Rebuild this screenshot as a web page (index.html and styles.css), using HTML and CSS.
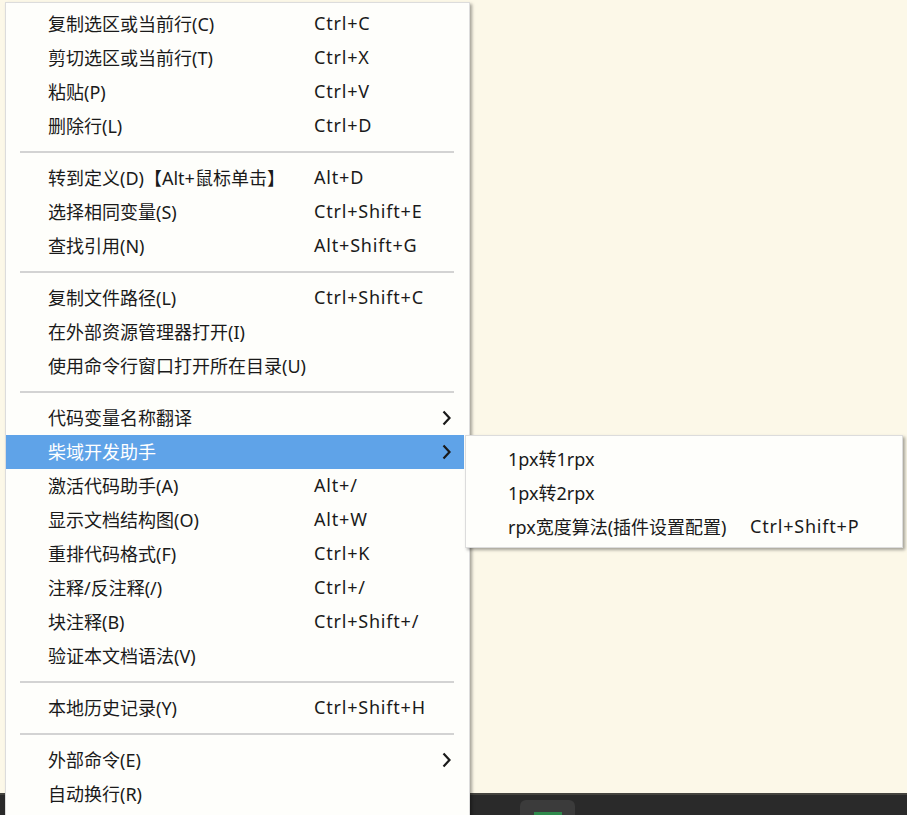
FILE: index.html
```html
<!DOCTYPE html>
<html lang="zh-CN">
<head>
<meta charset="utf-8">
<title>Context menu</title>
<link rel="stylesheet" href="styles.css">
</head>
<body>
<div class="editor"></div>
<div class="statusbar"><div class="tab"><span class="tab-mark"></span></div></div>

<div class="menu">
  <div class="item"><span class="label">复制选区或当前行(C)</span><span class="key">Ctrl+C</span></div>
  <div class="item"><span class="label">剪切选区或当前行(T)</span><span class="key">Ctrl+X</span></div>
  <div class="item"><span class="label">粘贴(P)</span><span class="key">Ctrl+V</span></div>
  <div class="item"><span class="label">删除行(L)</span><span class="key">Ctrl+D</span></div>
  <div class="sep"></div>
  <div class="item"><span class="label">转到定义(D)【Alt+鼠标单击】</span><span class="key">Alt+D</span></div>
  <div class="item"><span class="label">选择相同变量(S)</span><span class="key">Ctrl+Shift+E</span></div>
  <div class="item"><span class="label">查找引用(N)</span><span class="key">Alt+Shift+G</span></div>
  <div class="sep"></div>
  <div class="item"><span class="label">复制文件路径(L)</span><span class="key">Ctrl+Shift+C</span></div>
  <div class="item"><span class="label">在外部资源管理器打开(I)</span><span class="key"></span></div>
  <div class="item"><span class="label wide">使用命令行窗口打开所在目录(U)</span></div>
  <div class="sep"></div>
  <div class="item"><span class="label">代码变量名称翻译</span><span class="key"></span><svg class="arrow" viewBox="0 0 11 16" width="11" height="16"><path d="M2.5 1.5 L8.5 8 L2.5 14.5" fill="none" stroke="currentColor" stroke-width="2.2"/></svg></div>
  <div class="item active"><span class="label">柴域开发助手</span><span class="key"></span><svg class="arrow" viewBox="0 0 11 16" width="11" height="16"><path d="M2.5 1.5 L8.5 8 L2.5 14.5" fill="none" stroke="currentColor" stroke-width="2.2"/></svg></div>
  <div class="item"><span class="label">激活代码助手(A)</span><span class="key">Alt+/</span></div>
  <div class="item"><span class="label">显示文档结构图(O)</span><span class="key">Alt+W</span></div>
  <div class="item"><span class="label">重排代码格式(F)</span><span class="key">Ctrl+K</span></div>
  <div class="item"><span class="label">注释/反注释(/)</span><span class="key">Ctrl+/</span></div>
  <div class="item"><span class="label">块注释(B)</span><span class="key">Ctrl+Shift+/</span></div>
  <div class="item"><span class="label">验证本文档语法(V)</span><span class="key"></span></div>
  <div class="sep"></div>
  <div class="item"><span class="label">本地历史记录(Y)</span><span class="key">Ctrl+Shift+H</span></div>
  <div class="sep"></div>
  <div class="item"><span class="label">外部命令(E)</span><span class="key"></span><svg class="arrow" viewBox="0 0 11 16" width="11" height="16"><path d="M2.5 1.5 L8.5 8 L2.5 14.5" fill="none" stroke="currentColor" stroke-width="2.2"/></svg></div>
  <div class="item"><span class="label">自动换行(R)</span><span class="key"></span></div>
</div>

<div class="submenu">
  <div class="item"><span class="label sub">1px转1rpx</span><span class="key"></span></div>
  <div class="item"><span class="label sub">1px转2rpx</span><span class="key"></span></div>
  <div class="item"><span class="label sub">rpx宽度算法(插件设置配置)</span><span class="key">Ctrl+Shift+P</span></div>
</div>
</body>
</html>
```
FILE: styles.css
```css
html, body {
  margin: 0;
  padding: 0;
  width: 907px;
  height: 815px;
  overflow: hidden;
}
body {
  display: flex;
  flex-direction: column;
  background: #fcf8e8;
  font-family: "Noto Sans", "Noto Sans CJK SC", sans-serif;
  font-size: 18px;
  color: #1a1a1a;
  position: relative;
}
.editor {
  flex: 1;
  background: #fcf8e8;
  border-bottom: 2px solid #45443f;
}
.statusbar {
  height: 20px;
  background: #2a2a2a;
  display: flex;
  padding-left: 520px;
  padding-top: 5px;
  box-sizing: border-box;
}
.tab {
  width: 55px;
  height: 20px;
  background: #3b3b3b;
  border-radius: 6px 6px 0 0;
  display: flex;
  justify-content: center;
  align-items: flex-end;
}
.tab-mark {
  width: 28px;
  height: 3px;
  background: #2f8a4c;
  margin-bottom: 5px;
}
.menu {
  position: absolute;
  left: 5px;
  top: 2px;
  width: 465px;
  box-sizing: border-box;
  background: #fefefb;
  border: 1px solid #dcdcdc;
  padding: 4px 5px 4px 0;
  box-shadow: 2px 2px 3px rgba(0, 0, 0, 0.35);
}
.submenu {
  position: absolute;
  left: 465px;
  top: 435px;
  width: 438px;
  box-sizing: border-box;
  background: #fefefb;
  border: 1px solid #dcdcdc;
  padding: 6px 0 3px 0;
  box-shadow: 2px 2px 3px rgba(0, 0, 0, 0.35);
}
.item {
  height: 34px;
  box-sizing: border-box;
  display: flex;
  align-items: center;
  padding-left: 42px;
  padding-bottom: 2px;
  white-space: nowrap;
}
.item.active {
  background: #5fa3e8;
  color: #ffffff;
}
.item.active .arrow {
  color: #1a1a1a;
}
.label {
  width: 266px;
  flex: none;
}
.label.wide {
  width: auto;
}
.label.sub {
  width: 242px;
}
.key {
  flex: 1;
  letter-spacing: 0.8px;
}
.arrow {
  flex: none;
  margin-right: 12px;
  margin-top: 2px;
  color: #1a1a1a;
}
.sep {
  height: 2px;
  background: #d3d3d3;
  margin: 8px 10px 8px 14px;
}
```
